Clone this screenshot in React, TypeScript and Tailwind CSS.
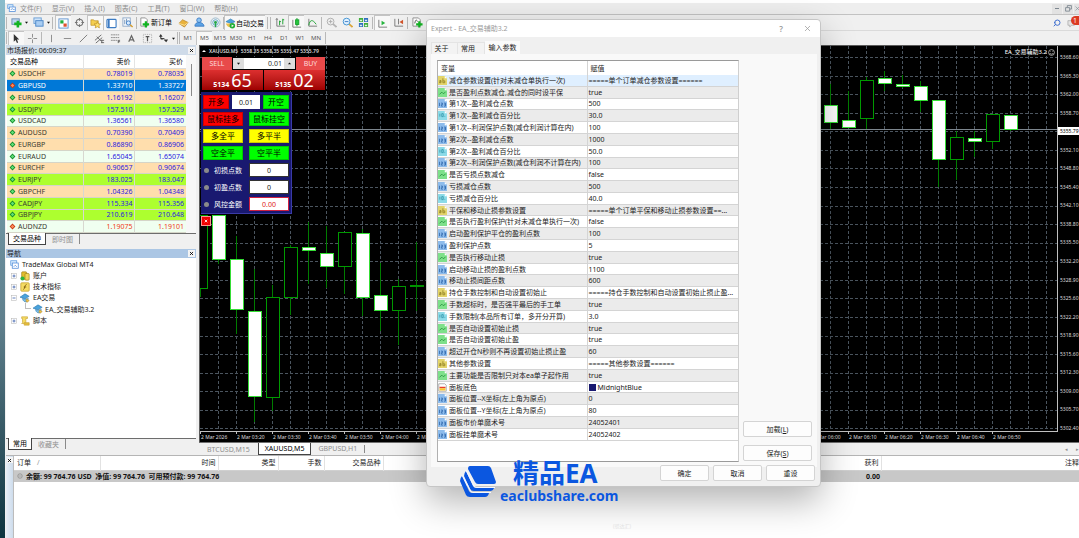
import type { ReactNode } from "react";
import { Search, X } from "lucide-react";

type QuoteTone = "peach" | "lime" | "mint" | "active";

const TONES: Record<QuoteTone, string> = {
  peach: "bg-[#ffdead]",
  lime: "bg-[#adff2f]",
  mint: "bg-[#f0fff0]",
  active: "bg-[#0078d7]",
};

const QUOTES: { symbol: string; bid: string; ask: string; tone: QuoteTone; down?: boolean }[] = [
  { symbol: "USDCHF", bid: "0.78019", ask: "0.78035", tone: "peach" },
  { symbol: "GBPUSD", bid: "1.33710", ask: "1.33727", tone: "active", down: true },
  { symbol: "EURUSD", bid: "1.16192", ask: "1.16207", tone: "peach" },
  { symbol: "USDJPY", bid: "157.510", ask: "157.529", tone: "lime" },
  { symbol: "USDCAD", bid: "1.36561", ask: "1.36580", tone: "mint" },
  { symbol: "AUDUSD", bid: "0.70390", ask: "0.70409", tone: "peach" },
  { symbol: "EURGBP", bid: "0.86890", ask: "0.86906", tone: "peach" },
  { symbol: "EURAUD", bid: "1.65045", ask: "1.65074", tone: "mint" },
  { symbol: "EURCHF", bid: "0.90657", ask: "0.90674", tone: "peach" },
  { symbol: "EURJPY", bid: "183.025", ask: "183.047", tone: "lime" },
  { symbol: "GBPCHF", bid: "1.04326", ask: "1.04348", tone: "peach" },
  { symbol: "CADJPY", bid: "115.334", ask: "115.356", tone: "lime" },
  { symbol: "GBPJPY", bid: "210.619", ask: "210.648", tone: "lime" },
  { symbol: "AUDNZD", bid: "1.19075", ask: "1.19101", tone: "mint", down: true },
];

type ParamKind = "text" | "bool" | "int" | "double" | "color";

const PARAMS: [ParamKind, string, string][] = [
  ["text", "减仓参数设置(针对未减仓单执行一次)", "=====单个订单减仓参数设置======"],
  ["bool", "是否盈利点数减仓,减仓的同时设平保", "true"],
  ["int", "第1次--盈利减仓点数", "500"],
  ["double", "第1次--盈利减仓百分比", "30.0"],
  ["int", "第1次--利润保护点数(减仓利润计算在内)", "100"],
  ["int", "第2次--盈利减仓点数", "1000"],
  ["double", "第2次--盈利减仓百分比", "50.0"],
  ["int", "第2次--利润保护点数(减仓利润不计算在内)", "100"],
  ["bool", "是否亏损点数减仓", "false"],
  ["int", "亏损减仓点数", "500"],
  ["double", "亏损减仓百分比", "40.0"],
  ["text", "平保和移动止损参数设置", "=====单个订单平保和移动止损参数设置==..."],
  ["bool", "是否执行盈利保护(针对未减仓单执行一次)", "false"],
  ["int", "启动盈利保护平仓的盈利点数", "100"],
  ["int", "盈利保护点数", "5"],
  ["bool", "是否执行移动止损", "true"],
  ["int", "启动移动止损的盈利点数", "1100"],
  ["int", "移动止损间距点数", "600"],
  ["text", "持仓手数控制和自动设置初始止", "=====持仓手数控制和自动设置初始止损止盈..."],
  ["bool", "手数超标时，是否强平最后的手工单", "true"],
  ["double", "手数限制(本品所有订单，多开分开算)", "3.0"],
  ["bool", "是否自动设置初始止损", "true"],
  ["bool", "是否自动设置初始止盈", "true"],
  ["int", "超过开仓N秒则不再设置初始止损止盈", "60"],
  ["text", "其他参数设置", "=====其他参数设置======"],
  ["bool", "主要功能是否限制只对本ea单子起作用", "true"],
  ["color", "面板底色", "MidnightBlue"],
  ["int", "面板位置--X坐标(左上角为原点)", "0"],
  ["int", "面板位置--Y坐标(左上角为原点)", "80"],
  ["int", "面板市价单魔术号", "24052401"],
  ["int", "面板挂单魔术号", "24052402"],
];

// x, wick top, body top, body bottom, wick bottom, bearish
const CANDLES: [number, number, number, number, number, boolean][] = [
  [200.5, 215, 215, 288, 297, false],
  [218.5, 215, 215, 259, 264, true],
  [236.5, 236, 259, 309, 334, true],
  [254.5, 269, 311, 396, 422, true],
  [272.5, 285, 297, 397, 411, false],
  [290.5, 245, 247, 297, 315, false],
  [308.5, 222, 247, 250, 284, true],
  [326.5, 226, 253, 266, 288, true],
  [344.5, 232, 232, 266, 294, false],
  [362.5, 229, 233, 297, 316, true],
  [380.5, 263, 295, 310, 331, true],
  [398.5, 279, 286, 310, 345, false],
  [416.5, 242, 286, 286, 311, false],
  [830.5, 84, 105, 122, 129, true],
  [848.5, 91, 120, 127, 128, true],
  [866.5, 77, 80, 118, 129, false],
  [884.5, 71, 78, 83, 91, true],
  [902.5, 75, 84, 86, 88, true],
  [920.5, 81, 86, 100, 112, true],
  [938.5, 100, 100, 159, 187, true],
  [956.5, 131, 137, 159, 180, false],
  [974.5, 131, 138, 141, 157, true],
  [992.5, 114, 114, 141, 149, false],
  [1010.5, 115, 115, 129, 131, true],
];

const GRID_X = Array.from({ length: 47 }, (_, i) => 218.5 + 18 * i);
const GRID_Y = Array.from({ length: 21 }, (_, i) => Math.round(57 + 18.57 * i) + 0.5);

const PRICES = [
  "5368.60", "5365.30", "5362.00", "5358.70", "5355.40", "5352.10", "5348.80",
  "5345.40", "5342.10", "5338.80", "5335.50", "5332.20", "5328.90", "5325.60",
  "5322.20", "5318.90", "5315.60", "5312.30", "5309.00", "5305.70", "5302.40",
];

// one tick every ten minutes, ticks behind the dialog carry no label
const TIMES = [
  "2 Mar 2026", "2 Mar 03:20", "2 Mar 03:30", "2 Mar 03:40", "2 Mar 03:50", "2 Mar 04:00", "2 Mar 04:10",
  "", "", "", "", "", "", "", "", "", "",
  "2 Mar 06:00", "2 Mar 06:10", "2 Mar 06:20", "2 Mar 06:30", "2 Mar 06:40", "2 Mar 06:50",
];

function Icon({ children, className = "size-[11px]" }: { children: ReactNode; className?: string }) {
  return (
    <svg viewBox="0 0 12 12" fill="none" className={`shrink-0 ${className}`} aria-hidden="true">
      {children}
    </svg>
  );
}

function Tool({ label, pressed, children }: { label: string; pressed?: boolean; children: ReactNode }) {
  return (
    <button
      type="button"
      aria-label={label}
      className={`flex h-[15px] w-4 shrink-0 items-center justify-center ${
        pressed ? "border-t border-l border-[#c4c4c4] bg-[#f8f8f8]" : ""
      }`}
    >
      {children}
    </button>
  );
}

function Caret() {
  return (
    <svg viewBox="0 0 4 4" className="mx-px size-[3px] shrink-0" aria-hidden="true">
      <path d="M0 1h4L2 3.5z" fill="#111" />
    </svg>
  );
}

function Sep() {
  return <span className="mx-px h-3 w-px shrink-0 bg-[#b8b8b8]" />;
}

function MenuBar() {
  const items = ["文件(F)", "显示(V)", "插入(I)", "图表(C)", "工具(T)", "窗口(W)", "帮助(H)"];
  return (
    <nav className="flex h-[11px] items-center bg-[#eeeeee] pl-[2px] text-[#8e8e8e]">
      <Icon className="size-[9px]">
        <rect x="1" y="1" width="7" height="5" fill="#dbeeff" stroke="#5a9ae0" />
        <rect x="3" y="4" width="8" height="6" fill="#fff" stroke="#4a88d8" />
        <path d="M5 8l2-2 2 2 1-1" stroke="#4a88d8" />
      </Icon>
      <div className="ml-[4px] flex gap-[10px]">
        {items.map((item) => (
          <button type="button" key={item}>{item}</button>
        ))}
      </div>
      <div className="ml-auto flex items-center text-[#7d8790]">
        <button type="button" aria-label="最小化" className="flex size-[10px] items-center justify-center bg-[#e2e2e2]">
          <span className="h-px w-1 bg-[#7d8790]" />
        </button>
        <button type="button" aria-label="还原" className="mx-px flex size-[10px] items-center justify-center bg-[#e2e2e2]">
          <Icon className="size-[7px]">
            <path d="M4 4V1h7v6H8M1 4.500h7v6H1z" stroke="#7d8790" strokeWidth="1.500" />
          </Icon>
        </button>
        <button type="button" aria-label="关闭" className="flex h-[10px] w-[5px] items-center overflow-hidden bg-[#e2e2e2]">
          <X className="size-[7px] shrink-0" />
        </button>
      </div>
    </nav>
  );
}

function MainToolbar() {
  return (
    <div className="flex h-4 items-center border-t border-[#c2c2c2] bg-[#f0f0f0] text-black">
      <Sep />
      <Tool label="新图表">
        <Icon>
          <rect x="1" y="2" width="8" height="6" fill="#bcd6f0" stroke="#6d8fb5" />
          <path d="M7.500 4v7.500M3.500 7.500h8" stroke="#12b422" strokeWidth="2.800" />
        </Icon>
      </Tool>
      <Caret />
      <span className="w-px" />
      <Tool label="配置">
        <Icon>
          <rect x="1" y="1" width="8" height="6" fill="#cfe4fa" stroke="#6c9fd4" />
          <rect x="3" y="4" width="8" height="6" fill="#a9cdf3" stroke="#4a86c8" />
        </Icon>
      </Tool>
      <Caret />
      <Sep />
      <span className="w-px" />
      <Tool label="市场报价" pressed>
        <Icon>
          <rect x="1" y="1" width="10" height="10" fill="#fff" stroke="#5b92cf" />
          <path d="M2.500 2.500h3.500v3.500H2.500z" fill="#1eae3c" />
          <path d="M6 6h3.500v3.500H6z" fill="#e0502c" />
        </Icon>
      </Tool>
      <Tool label="数据窗口">
        <Icon>
          <circle cx="6" cy="6" r="3.500" stroke="#777" strokeWidth="1.200" />
          <path d="M6 1v3M6 8v3M1 6h3M8 6h3" stroke="#777" strokeWidth="1.200" />
        </Icon>
      </Tool>
      <Tool label="导航" pressed>
        <Icon>
          <path d="M1 2h3l1 1h4v5H1z" fill="#f4cf52" stroke="#b98a1d" strokeWidth=".7" />
          <path d="M8 4l1 2.300 2.500.2L9.700 8.200l.6 2.600L8 9.500l-2.300 1.300.6-2.600-1.800-1.700L7 6.300z" fill="#ffe36b" stroke="#b98a1d" strokeWidth=".7" />
        </Icon>
      </Tool>
      <Tool label="终端" pressed>
        <Icon>
          <rect x="1" y="1.500" width="10" height="9" rx="1" fill="#fff" stroke="#3d7cc4" strokeWidth="1.200" />
          <path d="M2 2h2v8H2z" fill="#3d7cc4" />
        </Icon>
      </Tool>
      <Tool label="策略测试">
        <Icon>
          <rect x="1" y="1" width="8" height="9" fill="#fff" stroke="#8aa5c6" />
          <path d="M3 3v5M5 2v4" stroke="#6b8cb3" />
          <circle cx="7" cy="6.500" r="2.300" fill="#d7ebff" stroke="#3d7cc4" />
          <path d="M9 8.500l2.500 2.500" stroke="#d59d2d" strokeWidth="1.500" />
        </Icon>
      </Tool>
      <Sep />
      <button type="button" className="flex shrink-0 items-center gap-px pl-px">
        <Icon>
          <path d="M2 1h5l2 2v7H2z" fill="#fff" stroke="#777" strokeWidth=".8" />
          <path d="M7.500 4.500v7M4 8h7" stroke="#12b422" strokeWidth="2.400" />
        </Icon>
        新订单
      </button>
      <span className="w-[3px]" />
      <Tool label="编辑器">
        <Icon>
          <path d="M1 7l4-4 6 3-4 5z" fill="#e9b23c" stroke="#b98120" strokeWidth=".8" />
          <path d="M1 7l6 2 4-3" stroke="#fff1b8" strokeWidth=".8" />
        </Icon>
      </Tool>
      <Tool label="社区">
        <Icon>
          <circle cx="5.500" cy="3.500" r="2.500" fill="#8ec4f2" stroke="#3d7cc4" />
          <path d="M1 10c0-3 2-4 4.500-4s5 1 5.500 4z" fill="#5ba3e6" stroke="#3d7cc4" />
        </Icon>
      </Tool>
      <Tool label="信号">
        <Icon>
          <circle cx="6" cy="6" r="5" stroke="#9ab8cc" />
          <circle cx="6" cy="6" r="3" stroke="#58a4cc" />
          <circle cx="6" cy="6" r="1.600" fill="#24a64a" />
          <path d="M6 7v4" stroke="#24a64a" strokeWidth="1.500" />
        </Icon>
      </Tool>
      <span className="h-3 w-px shrink-0 bg-[#b8b8b8]" />
      <button
        type="button"
        className="flex h-[15px] shrink-0 items-center border-t border-l border-[#c4c4c4] bg-[#f8f8f8] pr-px"
      >
        <Icon>
          <path d="M1 4l5-3 5 3-5 2z" fill="#4aa3dc" stroke="#2874ad" strokeWidth=".6" />
          <path d="M1 6c1 4 5 5 7 3L8 6z" fill="#edc04a" />
          <circle cx="8" cy="8.500" r="3" fill="#1fae36" />
          <path d="M7.200 7l2.400 1.500-2.400 1.500z" fill="#fff" />
        </Icon>
        自动交易
      </button>
      <span className="w-px" />
      <Sep />
      <Sep />
      <Tool label="柱状图">
        <Icon>
          <path d="M2 2v8h9M1 3l1-1.500L3 3" stroke="#777" />
          <path d="M5 4v5M5 5h1.500M8.500 2v6M8.500 3H10" stroke="#16a02b" />
        </Icon>
      </Tool>
      <Tool label="蜡烛图" pressed>
        <Icon>
          <path d="M2 2v8h9" stroke="#777" />
          <path d="M6.500 0v9" stroke="#16a02b" />
          <rect x="5" y="2" width="3.500" height="5" fill="#27c53f" stroke="#16a02b" />
        </Icon>
      </Tool>
      <Tool label="折线图">
        <Icon>
          <path d="M2 2v8h9" stroke="#777" />
          <path d="M2 9c1-6 4-7 8-1" stroke="#16a02b" />
        </Icon>
      </Tool>
      <Sep />
      <Tool label="放大">
        <Icon>
          <path d="M7.500 7.500l4 3.500" stroke="#b5b5b5" strokeWidth="2" />
          <circle cx="5" cy="5" r="3.700" fill="#efefef" stroke="#acacac" />
          <path d="M3 5h4M5 3v4" stroke="#acacac" />
        </Icon>
      </Tool>
      <Tool label="缩小">
        <Icon>
          <path d="M7.500 7.500l4 3.500" stroke="#dba63b" strokeWidth="2" />
          <circle cx="5" cy="5" r="3.700" fill="#dff0ff" stroke="#3d8fd0" />
          <path d="M3 5h4" stroke="#3d7cc4" />
        </Icon>
      </Tool>
      <Tool label="平铺窗口">
        <Icon>
          <path d="M1 1h4.500v4.500H1zM6.500 6.500H11V11H6.500z" fill="#3fae3a" />
          <path d="M6.500 1H11v4.500H6.500zM1 6.500h4.500V11H1z" fill="#2f6fc0" />
          <path d="M2 3h2.500v1.500H2zM7.500 3H10v1.500H7.500zM2 8.500h2.500V10H2zM7.500 8.500H10V10H7.500z" fill="#dff0e6" />
        </Icon>
      </Tool>
      <Sep />
      <Tool label="自动滚动" pressed>
        <Icon>
          <path d="M2 2v8h9" stroke="#777" />
          <path d="M5 3l4 2.500L5 8z" fill="#27b53f" />
        </Icon>
      </Tool>
      <Tool label="图表平移">
        <Icon>
          <path d="M2 2v8h9M6 2v6" stroke="#777" />
          <path d="M11 3L7 5.500 11 8z" fill="#d2542b" />
        </Icon>
      </Tool>
      <Sep />
      <Tool label="技术指标">
        <Icon>
          <path d="M1 1h6l2 2v7H1z" fill="#fff" stroke="#777" strokeWidth=".8" />
          <path d="M3 7c1-5 2-4 3-2" stroke="#555" />
          <path d="M8 4.500v7M4.500 8h7" stroke="#12b422" strokeWidth="2.400" />
        </Icon>
      </Tool>
      <Caret />
      <div className="ml-auto flex items-center gap-[6px]">
        <button type="button" aria-label="搜索">
          <Search className="size-[8px] -scale-x-100 text-[#3f6fd0]" strokeWidth={3} />
        </button>
        <button type="button" aria-label="通知" className="relative h-[11px] w-[12px]">
          <Icon>
            <path d="M1 4h7v5H5l-2 2V9H1z" fill="#e3e3e3" stroke="#a8a8a8" strokeWidth=".8" />
          </Icon>
          <span className="absolute -top-px right-0 flex h-[9px] w-[8px] items-center justify-center rounded-l-full bg-[#dc3a22] text-[7px] text-white">
            1
          </span>
        </button>
      </div>
    </div>
  );
}

function DrawToolbar() {
  const frames = ["M1", "M5", "M15", "M30", "H1", "H4", "D1", "W1", "MN"];
  return (
    <div className="flex h-[15px] items-center border-t border-[#dadada] bg-[#f0f0f0]">
      <Sep />
      <Tool label="光标" pressed>
        <Icon>
          <path d="M3 1v8.500l2-2 1.500 3.500 1.300-.6L6.500 7H9z" fill="#333" />
        </Icon>
      </Tool>
      <Tool label="十字准线">
        <Icon>
          <path d="M6 1v4M6 7v4M1 6h4M7 6h4" stroke="#888" />
        </Icon>
      </Tool>
      <Sep />
      <Tool label="垂直线"><Icon><path d="M6 2v8" stroke="#888" /></Icon></Tool>
      <Tool label="水平线"><Icon><path d="M2 6h8" stroke="#888" /></Icon></Tool>
      <Tool label="趋势线"><Icon><path d="M2 10l8-8" stroke="#777" /></Icon></Tool>
      <Tool label="通道">
        <Icon>
          <path d="M1 8l7-6M2 11l7-6M3 4l5 5" stroke="#666" />
          <path d="M8 8h3M8 10.500h3M8.500 7.500V11" stroke="#444" strokeWidth=".8" />
        </Icon>
      </Tool>
      <Tool label="斐波那契">
        <Icon>
          <path d="M1 2h9M1 5h9M1 8h7" stroke="#888" strokeDasharray="2 .5" />
          <path d="M9 8v3M9 8h2M9 9.500h2" stroke="#444" strokeWidth=".8" />
        </Icon>
      </Tool>
      <Tool label="文字"><Icon><path d="M3 9.500L6 3l3 6.500M4.200 7.500h3.600" stroke="#666" strokeWidth="1.300" /></Icon></Tool>
      <Tool label="文字标签">
        <Icon>
          <rect x="1.500" y="1.500" width="9" height="9" stroke="#aaa" strokeDasharray="1 1" />
          <path d="M4 4h4M6 4v5" stroke="#555" strokeWidth="1.300" />
        </Icon>
      </Tool>
      <Tool label="箭头">
        <Icon>
          <path d="M1 4l2-3 2 3zM3 5l3 2H3zM6 7h5l-2 3z" fill="#333" />
          <path d="M3 3v3h4" stroke="#333" />
        </Icon>
      </Tool>
      <Caret />
      <Sep />
      <span className="h-3 w-px shrink-0 bg-[#b8b8b8]" />
      {frames.map((f) => (
        <button
          type="button"
          key={f}
          className={`h-[14px] w-4 shrink-0 text-center text-[6px] text-[#555] ${
            f === "M5" ? "border-t border-l border-[#c4c4c4] bg-[#f8f8f8]" : ""
          }`}
        >
          {f}
        </button>
      ))}
      <Sep />
    </div>
  );
}

function DockTitle({ title, className }: { title: string; className: string }) {
  return (
    <div className={`flex items-center justify-between pr-px pl-px ${className}`}>
      <h2 className="text-[#1c1c1c]">{title}</h2>
      <button type="button" aria-label={`关闭${title}`} className="flex size-[7px] items-center justify-center bg-[#f4f4f4]">
        <X className="size-[5px] text-black" strokeWidth={4} />
      </button>
    </div>
  );
}

function DockTabs({ active, other }: { active: string; other: string }) {
  return (
    <div className="flex h-[13px] items-start border-t border-[#6d6d6d] bg-[#f0f0f0] pl-[2px]">
      <button type="button" className="-mt-px h-[12px] border-r border-b border-l border-[#444] bg-white px-[4px] text-black">
        {active}
      </button>
      <button type="button" className="h-[10px] border-r border-[#8a8a8a] px-[6px] text-[#8f8f8f]">
        {other}
      </button>
    </div>
  );
}

function MarketWatch() {
  return (
    <section>
      <DockTitle title="市场报价: 06:09:37" className="h-[10px] bg-[#cfdbe9]" />
      <div className="flex bg-white pl-px">
        <table className="h-[178px] flex-1 table-fixed border-collapse">
          <colgroup>
            <col />
            <col className="w-[51px]" />
            <col className="w-[52px]" />
          </colgroup>
          <thead>
            <tr className="h-[13px] border-b border-[#dcdcdc] text-black">
              <th className="pl-[3px] text-left font-normal">交易品种</th>
              <th className="border-l border-[#e4e4e4] pr-[3px] text-right font-normal">卖价</th>
              <th className="border-l border-[#e4e4e4] pr-[3px] text-right font-normal">买价</th>
            </tr>
          </thead>
          <tbody>
            {QUOTES.map((q) => {
              const price = q.tone === "active" ? "text-white" : q.down ? "text-[#f03a20]" : "text-[#2a20e0]";
              return (
                <tr key={q.symbol} className={`border-b border-[#d5d5c8] ${TONES[q.tone]}`}>
                  <td className={`py-0 ${q.tone === "active" ? "text-white" : "text-[#3a3a30]"}`}>
                    <span className="flex items-center gap-[2px] pl-[2px]">
                      <Icon className="size-[7px]">
                        <path d="M6 1l5 5-5 5-5-5z" fill={q.down ? "#c43a12" : "#128a2a"} />
                        <path d="M6 3l3 3-3 3-3-3z" fill={q.down ? "#ff8a5c" : "#5fe077"} />
                      </Icon>
                      {q.symbol}
                    </span>
                  </td>
                  <td className={`border-l border-[#d8d8d0] py-0 pr-px text-right ${price}`}>{q.bid}</td>
                  <td className={`border-l border-[#d8d8d0] py-0 pr-[2px] text-right ${price}`}>{q.ask}</td>
                </tr>
              );
            })}
          </tbody>
        </table>
        <div className="flex w-[10px] justify-center bg-[#f7f7f7] pt-[9px]">
          <span className="h-8 w-px bg-[#8a8a8a]" />
        </div>
      </div>
      <DockTabs active="交易品种" other="即时图" />
    </section>
  );
}

function TreeToggle({ open }: { open?: boolean }) {
  return (
    <Icon className="size-[6px]">
      <rect x="1" y="1" width="10" height="10" fill="#fff" stroke="#b0b0b0" />
      <path d={open ? "M3 6h6" : "M3 6h6M6 3v6"} stroke="#3358a8" strokeWidth="1.500" />
    </Icon>
  );
}

function ExpertIcon() {
  return (
    <Icon className="size-[10px]">
      <path d="M0 5l6-4 5 3-5 3z" fill="#4aa3dc" stroke="#2874ad" strokeWidth=".7" />
      <path d="M3 6.500c0 3 3 5 6 4l1-4-4 1z" fill="#7cc0ea" stroke="#2874ad" strokeWidth=".6" />
      <path d="M8 7l3 2-2 2-2-1z" fill="#edc04a" stroke="#a87c18" strokeWidth=".5" />
    </Icon>
  );
}

function Navigator() {
  return (
    <section className="mt-[3px] flex flex-1 flex-col">
      <DockTitle title="导航" className="h-[9px] bg-[#abc6e4]" />
      <ul className="flex-1 bg-white pl-[4px] text-[#222]">
        <li className="flex h-[12px] items-center gap-[3px]">
          <Icon className="size-[9px]">
            <rect x="1" y="1" width="8" height="6" fill="#dbeeff" stroke="#5a9ae0" />
            <rect x="3" y="4" width="8" height="7" fill="#fff" stroke="#4a88d8" />
            <path d="M5 9l2-2 2 2" stroke="#4a88d8" />
          </Icon>
          TradeMax Global MT4
        </li>
        <li className="flex h-[11px] items-center gap-[3px] pl-px">
          <TreeToggle />
          <Icon className="size-[10px]">
            <rect x="2" y="1" width="6" height="9" rx="1" fill="#e3bd2e" stroke="#92710e" strokeWidth=".7" />
            <rect x="6" y="3" width="5" height="8" rx="1" fill="#f3d65a" stroke="#92710e" strokeWidth=".7" />
            <circle cx="3" cy="9" r="2.500" fill="#2fb540" />
          </Icon>
          账户
        </li>
        <li className="flex h-[11px] items-center gap-[3px] pl-px">
          <TreeToggle />
          <Icon className="size-[10px]">
            <rect x="1" y="1" width="10" height="10" rx="1" fill="#f6dc63" stroke="#c9a63a" />
            <path d="M8 3c-3 0-2 6-4 6M4.500 6h3" stroke="#77560a" />
          </Icon>
          技术指标
        </li>
        <li>
          <div className="flex h-[11px] items-center gap-[3px] pl-px">
            <TreeToggle open />
            <ExpertIcon />
            EA交易
          </div>
          <ul className="pl-[15px]">
            <li className="flex h-[12px] items-center gap-[2px]">
              <span className="mb-[6px] h-[6px] w-[6px] border-b border-l border-[#bdbdbd]" />
              <ExpertIcon />
              EA_交易辅助3.2
            </li>
          </ul>
        </li>
        <li className="flex h-[11px] items-center gap-[3px] pl-px">
          <TreeToggle />
          <Icon className="size-[10px]">
            <path d="M2 1h7v2H7v6H2l1-1V3H2z" fill="#f6dc63" stroke="#c9a63a" strokeWidth=".8" />
            <path d="M5 8h6v3H5z" fill="#e6bd3c" stroke="#c9a63a" strokeWidth=".8" />
          </Icon>
          脚本
        </li>
      </ul>
      <DockTabs active="常用" other="收藏夹" />
    </section>
  );
}

function CandleChart() {
  return (
    <svg className="block h-[385px] w-full" role="img" aria-label="XAUUSD M5">
      {/* series values are kept in window units */}
      <g transform="translate(-200 -46)">
        {GRID_X.map((x) => (
          <path key={x} d={`M${x} 46V431`} stroke="#4b555f" strokeDasharray="3 2" />
        ))}
        {GRID_Y.map((y) => (
          <path key={y} d={`M200 ${y}H3000`} stroke="#4b555f" strokeDasharray="3 2" />
        ))}
        <path d="M200 129.500H3000" stroke="#7d868e" />
        {CANDLES.map(([x, high, top, bottom, low, bearish]) => (
          <g key={x}>
            <path d={`M${x} ${high}V${low}`} stroke="#007c00" />
            {/* open equals close: a plain dash */}
            {top === bottom ? (
              <path d={`M${x - 6.5} ${top}h14`} stroke="#00a000" strokeWidth={2} />
            ) : (
              <rect
                x={x - 6}
                y={top + 0.5}
                width={13}
                height={bottom - top}
                fill={bearish ? "#ffffff" : "#000000"}
                stroke={bearish ? "#35dd35" : "#009a00"}
              />
            )}
          </g>
        ))}
      </g>
    </svg>
  );
}

function OneClickTrade() {
  return (
    <div className="absolute top-[11px] left-[2px] w-[123px] bg-black text-[7px] leading-[9px] text-white">
      <div className="flex h-[13px] justify-between">
        <button type="button" className="w-[30px] bg-[#e84a4a] text-[#ffd9d9]">SELL</button>
        <div className="mt-px flex h-[11px] w-[62px] bg-[#dddddd]">
          <button type="button" aria-label="减少手数" className="flex w-[11px] items-center justify-center"><Caret /></button>
          <input
            aria-label="交易手数"
            defaultValue="0.01"
            className="min-w-0 flex-1 bg-white pr-[2px] text-right text-[#333] outline-none"
          />
          <button type="button" aria-label="增加手数" className="flex w-[11px] rotate-180 items-center justify-center"><Caret /></button>
        </div>
        <button type="button" className="w-[29px] bg-[#e84a4a] text-[#ffd9d9]">BUY</button>
      </div>
      <div className="flex h-[20px] justify-between">
        <button type="button" className="flex w-[61px] items-end justify-center gap-[2px] bg-linear-to-b from-[#dd2f2f] to-[#9e0000] pb-px font-bold">
          5134 <span className="text-[18px] leading-[18px] font-normal">65</span>
        </button>
        <button type="button" className="flex w-[61px] items-end justify-center gap-[2px] bg-linear-to-b from-[#dd2f2f] to-[#9e0000] pb-px font-bold">
          5135 <span className="text-[18px] leading-[18px] font-normal">02</span>
        </button>
      </div>
    </div>
  );
}

const PANEL_BTN = "h-[14px] border border-black/20 text-[8px] leading-[12px] whitespace-nowrap text-black";

function TradePanel() {
  const inputs = [
    { id: "init-sl", label: "初损点数", value: "0", alert: false },
    { id: "init-tp", label: "初盈点数", value: "0", alert: false },
    { id: "risk", label: "风控金额", value: "0.00", alert: true },
  ];
  return (
    <div className="absolute top-[46px] left-px flex w-[91px] flex-col gap-[3px] border-r border-b border-[#3a3aa8] bg-[#191970] px-[2px] pt-[3px] pb-[2px] text-[7px] leading-[9px]">
      <div className="flex justify-between">
        <button type="button" className={`w-[26px] bg-[#ff0000] ${PANEL_BTN}`}>开多</button>
        <input aria-label="手数" defaultValue="0.01" className="h-[14px] w-[28px] bg-white text-center text-[#222] outline-none" />
        <button type="button" className={`w-[26px] bg-[#00ff00] ${PANEL_BTN}`}>开空</button>
      </div>
      <div className="flex justify-between">
        <button type="button" className={`w-[40px] bg-[#ff0000] ${PANEL_BTN}`}>鼠标挂多</button>
        <button type="button" className={`w-[40px] bg-[#00ff00] ${PANEL_BTN}`}>鼠标挂空</button>
      </div>
      <div className="flex justify-between">
        <button type="button" className={`w-[40px] bg-[#ffff00] ${PANEL_BTN}`}>多全平</button>
        <button type="button" className={`w-[40px] bg-[#ffff00] ${PANEL_BTN}`}>多平半</button>
      </div>
      <div className="flex justify-between">
        <button type="button" className={`w-[40px] bg-[#00ff00] ${PANEL_BTN}`}>空全平</button>
        <button type="button" className={`w-[40px] bg-[#00ff00] ${PANEL_BTN}`}>空平半</button>
      </div>
      {inputs.map((f) => (
        <div key={f.id} className="flex items-center">
          <span className="ml-px size-[5px] rounded-full bg-[#8a8a8a]" />
          <label htmlFor={f.id} className="ml-[5px] text-white">{f.label}</label>
          <input
            id={f.id}
            defaultValue={f.value}
            className={`ml-auto h-[14px] w-[40px] border bg-white text-center outline-none ${
              f.alert ? "border-[#d02040] text-[#e02020]" : "border-[#333] text-[#222]"
            }`}
          />
        </div>
      ))}
    </div>
  );
}

function ChartWindow() {
  return (
    <section className="ml-[3px] flex min-w-0 flex-1 flex-col">
      <div className="relative flex border-t border-l border-[#5a5a5a] bg-black text-[5px] text-[#dddddd]">
        <div className="min-w-0 flex-1">
          <CandleChart />
          <div className="flex h-[11px] overflow-hidden border-t border-[#c0c0c0]">
            {TIMES.map((t, i) => (
              <span key={i} className="flex w-[36px] shrink-0 items-start leading-[10px] whitespace-nowrap">
                <span className="h-[2px] w-px bg-[#c0c0c0]" />
                {t}
              </span>
            ))}
          </div>
        </div>
        <div className="flex h-[386px] w-[22px] shrink-0 flex-col justify-between overflow-hidden border-l border-[#c0c0c0] pt-[7px] leading-[8px]">
          {PRICES.map((p) => (
            <span key={p} className={p === "5355.40" ? "bg-white pl-[2px] text-black" : "pl-[2px]"}>
              {p === "5355.40" ? "5355.79" : p}
            </span>
          ))}
        </div>
        <p className="absolute top-px left-[2px] flex items-center gap-[3px] leading-[8px] font-semibold whitespace-pre">
          <Icon className="size-[4px]"><path d="M0 9l6-6 6 6z" fill="#fff" /></Icon>
          {"XAUUSD,M5  5358.35 5358.35 5355.47 5355.79"}
        </p>
        <p className="absolute top-[2px] right-[24px] flex items-center gap-px text-[6px] leading-[8px] text-white">
          EA_交易辅助3.2
          <Icon className="size-[7px]">
            <circle cx="6" cy="6" r="5" stroke="#fff" />
            <path d="M4 4v1M8 4v1M3 7c1 2.500 5 2.500 6 0" stroke="#fff" />
          </Icon>
        </p>
        <OneClickTrade />
        <TradePanel />
        <button
          type="button"
          aria-label="关闭面板"
          className="absolute top-[170px] left-px flex size-[10px] items-center justify-center border border-[#ff9090] bg-[#f00000]"
        >
          <X className="size-[4px] text-white" strokeWidth={5} />
        </button>
      </div>
      <div className="flex h-[13px] items-start border-t border-[#707070] bg-[#f0f0f0] text-[#8f8f8f]">
        <button type="button" className="h-[12px] px-[8px]">BTCUSD,M15</button>
        <button type="button" className="h-[12px] border-x border-b border-[#444] bg-white px-[6px] text-black">XAUUSD,M5</button>
        <button type="button" className="mt-[2px] h-[8px] border-r border-[#8a8a8a] px-[7px] leading-[8px]">GBPUSD,H1</button>
        <span className="mt-[2px] ml-auto text-[5px] whitespace-pre">◂      ▸</span>
      </div>
    </section>
  );
}

function Terminal() {
  return (
    <section className="flex flex-1 border-t border-[#b5b5b5]">
      <div className="flex w-[7px] shrink-0 justify-center bg-linear-to-r from-[#e8eff7] to-[#cddcec] pt-px">
        <button type="button" aria-label="关闭终端" className="flex size-[6px] items-center justify-center bg-[#f6f6f6]">
          <X className="size-[5px] text-black" strokeWidth={4} />
        </button>
      </div>
      <div className="min-w-0 flex-1 border-l border-[#bcbcbc] bg-white">
        <table className="w-full table-fixed border-collapse text-[#222]">
          <colgroup>
            <col className="w-[86px]" />
            <col className="w-[118px]" />
            <col className="w-[60px]" />
            <col className="w-[46px]" />
            <col className="w-[59px]" />
            <col />
            <col className="w-[198px]" />
          </colgroup>
          <thead>
            <tr className="h-[14px] border-b border-[#d0d0d0] [&>th]:border-r [&>th]:border-[#e2e2e2] [&>th]:pr-[2px] [&>th]:text-right [&>th]:font-normal [&>th:last-child]:border-r-0 [&>th:last-child]:pr-0">
              <th>
                <span className="flex gap-[6px] pl-[3px]">订单 <span className="text-[#999]">/</span></span>
              </th>
              <th>时间</th>
              <th>类型</th>
              <th>手数</th>
              <th>交易品种</th>
              <th>获利</th>
              <th>注释</th>
            </tr>
          </thead>
          <tbody>
            <tr className="h-[12px] bg-[#c8c8c8] font-bold text-[#111]">
              <td colSpan={5} className="py-0">
                <span className="flex items-center gap-[3px] pl-[3px] whitespace-pre">
                  <Icon className="size-[6px]"><circle cx="6" cy="6" r="4.500" stroke="#8c8c8c" strokeWidth="1.500" /><path d="M3 6h6" stroke="#8c8c8c" /></Icon>
                  {"余额: 99 764.76 USD  净值: 99 764.76  可用预付款: 99 764.76"}
                </span>
              </td>
              <td className="py-0 pr-px text-right">0.00</td>
              <td />
            </tr>
          </tbody>
        </table>
      </div>
    </section>
  );
}

function ParamIcon({ kind }: { kind: ParamKind }) {
  if (kind === "color") {
    return (
      <Icon className="size-[9px]">
        <path d="M1 1h8l2 2v8H1z" fill="#fff" stroke="#999" />
        <path d="M2 5h8v2H2z" fill="#e8402c" />
        <path d="M2 7h8v3H2z" fill="#f8c530" />
      </Icon>
    );
  }
  const fill = { text: "#e3d46a", bool: "#7ee08a", int: "#8dbcec", double: "#8cdbe8" }[kind];
  const glyph = {
    text: "M2 6h2v3H2V7.500h2M6.500 3v6h2.500V6.500H6.500",
    bool: "M2 8.500l3-3 2 2 3-2",
    int: "M2 5v4.500M4 5.500h2v2H4.500v2H6.500M8 5.500h2v4H8M8.500 7.500h1.500",
    double: "M2.500 3.500v4M5 3.500h2v4H5zM9 6.500v1",
  }[kind];
  const ink = { text: "#8d7d20", bool: "#1b8a34", int: "#2a63a8", double: "#2d93a8" }[kind];
  return (
    <Icon className="size-[9px]">
      <path d="M0 0h9l3 3v9H0z" fill={fill} />
      <path d="M9 0l3 3H9z" fill="#fff" />
      <path d={glyph} stroke={ink} />
    </Icon>
  );
}

const DIALOG_BTN = "h-[16px] rounded-[2px] border border-[#d4d4d4] bg-[#fdfdfd] text-[#222]";

function ExpertDialog() {
  return (
    <div
      role="dialog"
      aria-label="Expert - EA_交易辅助3.2"
      className="absolute top-[19px] left-[426px] w-[395px] rounded-[4px] border border-[#c6c6c6] bg-[#f0f0f0] text-[#222] shadow-[0_14px_36px_rgba(0,0,0,0.3)]"
    >
      <header className="flex h-[17px] items-center rounded-t-[4px] bg-white pr-[8px] pl-[4px] text-[#9b9b9b]">
        <h1>Expert - EA_交易辅助3.2</h1>
        <button type="button" aria-label="帮助" className="ml-auto text-[8px] font-semibold">?</button>
        <button type="button" aria-label="关闭" className="ml-[20px]"><X className="size-[9px]" /></button>
      </header>

      <div className="mt-[4px] ml-[4px] flex h-[13px] items-end">
        <button type="button" className="h-[12px] w-[27px] border border-b-0 border-[#e4e4e4] bg-[#f3f3f3] pr-[6px]">关于</button>
        <button type="button" className="h-[12px] w-[27px] border border-b-0 border-l-0 border-[#e4e4e4] bg-[#f3f3f3] pr-[6px]">常用</button>
        <button type="button" className="h-[13px] w-[35px] bg-[#fafafa]">输入参数</button>
      </div>

      <div className="mr-[3px] ml-[4px] flex gap-[4px] bg-[#f9f9f9] pt-[6px] pr-[5px] pb-[5px] pl-[6px]">
        <div className="h-[402px] w-[302px] border border-t-[#9a9a9a] border-r-[#cfcfcf] border-b-[#9a9a9a] border-l-[#b0b0b0] bg-white">
          <table className="h-[380px] w-full table-fixed border-collapse">
            <colgroup>
              <col className="w-[149px]" />
              <col />
            </colgroup>
            <thead>
              <tr className="h-[14px]">
                <th className="pl-[3px] text-left font-normal">变量</th>
                <th className="border-l border-[#d4d4d4] pl-[3px] text-left font-normal">赋值</th>
              </tr>
            </thead>
            <tbody>
              {PARAMS.map(([kind, name, value], i) => (
                <tr
                  key={name}
                  className={`border-b border-[#d4d4d4] ${i === 0 ? "bg-[#dfefff]" : i % 2 ? "bg-[#ebebeb]" : "bg-white"}`}
                >
                  <td className="overflow-hidden py-0">
                    <span className="flex items-center gap-[2px] whitespace-nowrap">
                      <ParamIcon kind={kind} />
                      {name}
                    </span>
                  </td>
                  <td className="overflow-hidden border-l border-[#d4d4d4] py-0 pl-px whitespace-nowrap">
                    {kind === "color" && <span className="mr-[2px] inline-block size-[7px] bg-[#191970] align-middle" />}
                    {value}
                  </td>
                </tr>
              ))}
            </tbody>
          </table>
        </div>
        <div className="flex flex-1 flex-col justify-end gap-[8px] pb-px">
          <button type="button" className={DIALOG_BTN}>加载(<u>L</u>)</button>
          <button type="button" className={DIALOG_BTN}>保存(<u>S</u>)</button>
        </div>
      </div>

      <footer className="-mt-[2px] flex justify-end gap-[4px] pr-[5px] pb-[5px]">
        <button type="button" className={`w-[49px] ${DIALOG_BTN}`}>确定</button>
        <button type="button" className={`w-[49px] ${DIALOG_BTN}`}>取消</button>
        <button type="button" className={`w-[49px] ${DIALOG_BTN}`}>重设</button>
      </footer>
    </div>
  );
}

function Watermark() {
  return (
    <div className="absolute top-[457px] left-[459px] flex text-[#0b57e0]">
      <svg viewBox="0 0 38 32" className="mt-[9px] h-[32px] w-[38px]" aria-hidden="true">
        <path d="M11 0h18q2 0 3 2l5 14q0 2-2 2H19q-2 0-3-2L9 3q0-3 2-3z" fill="currentColor" />
        <path d="M7 5l7 15q1 2 3 2h18q-1 3-4 3H15q-3 0-4-2L5 10q0-3 2-5z" fill="currentColor" />
        <path d="M3 10l7 15q1 2 3 2h17q-1 4-4 4H11q-3 0-4-2L1 15q0-3 2-5z" fill="currentColor" />
        <path d="M7 4l8 16q1 1.500 3 1.500h18M3.500 9.500l8 15.500q1 1.500 3 1.500H32" stroke="#f4f7ff" strokeWidth="1.200" fill="none" />
      </svg>
      <div className="ml-[3px] flex flex-col items-start font-bold">
        <span className="pl-[13px] text-[26px] leading-[32px]">精品EA</span>
        <span className="text-[14px] leading-[14px]">eaclubshare.com</span>
      </div>
    </div>
  );
}

export default function App() {
  return (
    <div className="relative flex min-h-screen overflow-hidden bg-[#f0f0f0] font-['Noto_Sans','Noto_Sans_CJK_SC',sans-serif] text-[7px] leading-[9px]">
      <div className="w-[5px] shrink-0 bg-linear-to-b from-[#8bbccb] via-[#5f7f8c] via-60% to-[#0d3540]" />
      <main className="flex min-w-0 flex-1 flex-col">
        <div className="h-[3px] bg-white" />
        <MenuBar />
        <MainToolbar />
        <DrawToolbar />
        <div className="flex pl-px">
          <aside className="flex w-[190px] shrink-0 flex-col pb-[4px]">
            <MarketWatch />
            <Navigator />
          </aside>
          <ChartWindow />
        </div>
        <div className="flex flex-1 flex-col pl-px">
          <Terminal />
        </div>
      </main>
      <ExpertDialog />
      <Watermark />
      <span className="absolute top-[522px] left-[613px] text-[5px] text-[#e2e2e2]">(驳达汇)</span>
    </div>
  );
}
